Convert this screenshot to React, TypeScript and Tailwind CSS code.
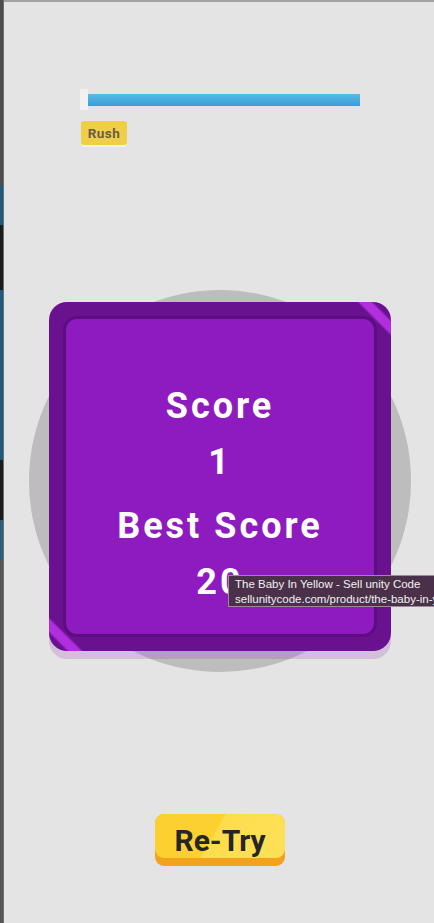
import React from "react";

const font = { fontFamily: "Roboto, 'Liberation Sans', sans-serif" };

// thin slice of the neighbouring window on the left edge
const EdgeStrip = () => (
  <div className="flex flex-col w-[4px] shrink-0 border-r border-[#6f6f6f]">
    <div className="h-[185px] bg-[#4d4d4d]" />
    <div className="h-[40px] bg-[#1d5a80]" />
    <div className="h-[65px] bg-[#1b1b1b]" />
    <div className="h-[170px] bg-[#1d5a80]" />
    <div className="h-[60px] bg-[#1b1b1b]" />
    <div className="h-[40px] bg-[#2c5d7c]" />
    <div className="flex-1 bg-[#555555]" />
  </div>
);

const ScoreCard = ({ score, best }: { score: number; best: number }) => (
  <div className="col-start-1 row-start-1 justify-self-center self-start mt-[12px] w-[342px] h-[349px] rounded-[18px] p-[14px] shadow-[0_8px_0_rgba(150,60,180,0.22)] bg-[linear-gradient(45deg,#6a1190_0%,#6a1190_2.5%,#b22fdf_3%,#b22fdf_4.5%,#6a1190_5%,#6a1190_95%,#b22fdf_95.5%,#b22fdf_97%,#6a1190_97.5%)]">
    <div
      className="h-full rounded-[14px] bg-[#8e1bc0] border-[3px] border-[#5c0d80] flex flex-col items-center pt-[59px] text-white font-bold text-[36px] leading-[56px] tracking-[3px]"
      style={font}
    >
      <div>Score</div>
      <div>{score}</div>
      <div className="mt-[8px]">Best Score</div>
      <div>{best}</div>
    </div>
  </div>
);

export default function App() {
  return (
    <div className="relative w-[434px] h-[923px] overflow-hidden bg-[#e4e4e4] flex">
      <EdgeStrip />

      <div className="flex-1 flex flex-col border-t-2 border-[#a3a3a3]">
        {/* timer bar + mode tag */}
        <div className="mt-[87px] ml-[76px] flex flex-col items-start">
          <div className="flex items-center h-[21px]">
            <div className="w-[8px] h-[21px] bg-[#f1f1f1]" />
            <div className="w-[272px] h-[12px] bg-[linear-gradient(180deg,#52bde6,#3f9cd8)]" />
          </div>
          <div
            className="mt-[11px] ml-[1px] h-[24px] w-[46px] flex items-center justify-center rounded-[3px] bg-[#efcf48] shadow-[0_2px_0_#f4f1e6] text-[13.5px] font-bold tracking-[0.5px] text-[#6b5c42]"
            style={font}
          >
            Rush
          </div>
        </div>

        {/* score panel over the grey disc */}
        <div className="mt-[145px] ml-[25px] grid w-[382px] h-[382px]">
          <div className="col-start-1 row-start-1 w-[382px] h-[382px] rounded-full bg-[#bdbdbd]" />
          <ScoreCard score={1} best={20} />
        </div>

        <div className="mt-[142px] flex justify-center pl-[2px]">
          <button
            className="w-[130px] h-[52px] rounded-[9px] bg-[#f2a21c] pb-[8px]"
            style={font}
          >
            <div className="h-full rounded-[9px] bg-[linear-gradient(120deg,#fcd12f_0%,#fcd12f_45%,#fedd4c_46%,#fde158_100%)] flex items-center justify-center pt-[8px] text-[30px] font-bold text-[#262626]">
              Re-Try
            </div>
          </button>
        </div>
      </div>

      {/* link hover tooltip */}
      <div
        className="absolute left-[228px] top-[575px] w-[230px] h-[32px] bg-[#4a3149] border border-[#9a8c98] pl-[6px] pt-[1px] text-[11.5px] leading-[15px] text-[#f2f2f2] whitespace-nowrap"
        style={{ fontFamily: "'Liberation Sans', Arial, sans-serif" }}
      >
        <div>The Baby In Yellow - Sell unity Code</div>
        <div>sellunitycode.com/product/the-baby-in-yellow</div>
      </div>
    </div>
  );
}
